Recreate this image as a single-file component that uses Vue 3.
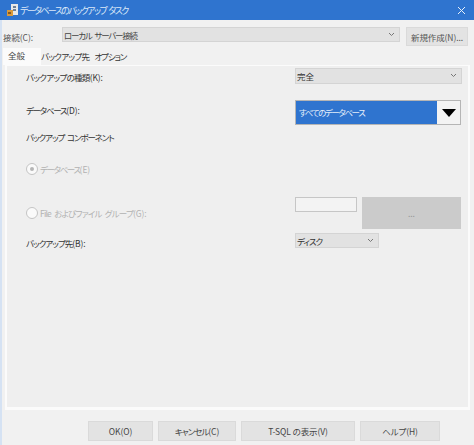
<script setup>
const footer = [
  { main: 'OK', sfx: '(O)', w: 65, cls: '' },
  { main: 'キャンセル', sfx: '(C)', w: 78, cls: 'tight' },
  { main: 'T-SQL の表示', sfx: '(V)', w: 114, cls: '' },
  { main: 'ヘルプ', sfx: '(H)', w: 80, cls: '' },
]
</script>

<template>
  <div class="window">
    <header class="title">
      <svg class="logo" width="12" height="13" viewBox="0 0 12 13">
        <rect x="4" y="0" width="7" height="11" fill="#e8e8e8" />
        <rect x="6" y="2" width="3" height="2" fill="#6d7f96" />
        <rect x="6" y="5" width="3" height="2" fill="#6d7f96" />
        <rect x="0" y="6" width="6" height="6" fill="#d99a3c" />
        <rect x="1" y="8" width="3" height="2" fill="#8a5a20" />
      </svg>
      <span class="title-text">データベースのバックアップ タスク</span>
      <svg class="close" width="9" height="9" viewBox="0 0 9 9">
        <path d="M1 1l7 7M8 1L1 8" stroke="#e6f0fb" stroke-width="1" fill="none" />
      </svg>
    </header>

    <div class="body">
      <div class="conn-row">
        <label class="conn-label">接続(C):</label>
        <div class="select conn-select">
          <span class="conn-value">ローカル サーバー接続</span>
          <svg class="chev" width="7" height="5" viewBox="0 0 7 5"><path d="M1 1l2.5 2.5L6 1" stroke="#777" fill="none" /></svg>
        </div>
        <button class="btn new-btn">新規作成(N)...</button>
      </div>

      <nav class="tabs">
        <span class="tab active">全般</span>
        <span class="tab dest-tab">バックアップ先</span>
        <span class="tab opt-tab">オプション</span>
      </nav>

      <section class="panel">
        <div class="form-row row-type">
          <label class="lbl">バックアップの種類<span class="sfx">(K):</span></label>
          <div class="select type-select">
            <span>完全</span>
            <svg class="chev" width="7" height="5" viewBox="0 0 7 5"><path d="M1 1l2.5 2.5L6 1" stroke="#777" fill="none" /></svg>
          </div>
        </div>

        <div class="form-row row-db">
          <label class="lbl">データベース<span class="sfx">(D):</span></label>
          <div class="db-select">
            <span class="db-value">すべてのデータベース</span>
            <span class="db-arrow">
              <svg width="14" height="8" viewBox="0 0 14 8"><path d="M0 0h14L7 8z" fill="#000" /></svg>
            </span>
          </div>
        </div>

        <div class="lbl comp">バックアップ コンポーネント</div>

        <div class="radio-row radio-db">
          <span class="radio on"><i></i></span>
          <span class="disabled">データベース<span class="sfx">(E)</span></span>
        </div>

        <div class="form-row row-file">
          <div class="radio-row">
            <span class="radio"></span>
            <span class="disabled file-text">File およびファイル グループ<span class="sfx">(G):</span></span>
          </div>
          <div class="file-ctrl">
            <div class="file-input"></div>
            <div class="file-btn">...</div>
          </div>
        </div>

        <div class="form-row row-dest">
          <label class="lbl">バックアップ先<span class="sfx">(B):</span></label>
          <div class="select disk-select">
            <span>ディスク</span>
            <svg class="chev" width="7" height="5" viewBox="0 0 7 5"><path d="M1 1l2.5 2.5L6 1" stroke="#777" fill="none" /></svg>
          </div>
        </div>
      </section>

      <footer class="footer">
        <button v-for="b in footer" :key="b.main" class="btn foot-btn" :class="b.cls" :style="{ width: b.w + 'px' }">{{ b.main }}<span class="sfx">{{ b.sfx }}</span></button>
      </footer>
    </div>
  </div>
</template>

<style>
html, body { margin: 0; background: #f0f0f0; }
</style>

<style scoped>
.window {
  width: 474px;
  height: 445px;
  overflow: hidden;
  box-sizing: border-box;
  font-family: "Noto Sans CJK JP", "Noto Sans", sans-serif;
  font-size: 8.5px;
  font-feature-settings: "palt";
  letter-spacing: -0.1px;
  color: #333;
  background: #f0f0f0;
  display: flex;
  flex-direction: column;
}
.sfx { letter-spacing: -0.1px; }
.title {
  height: 20px;
  flex: none;
  background: #2f74cf;
  color: #dbe8f8;
  display: flex;
  align-items: center;
  padding: 0 6px 0 7px;
  font-size: 9px;
  letter-spacing: -1.6px;
  word-spacing: 2px;
}
.logo { flex: none; margin-right: 1px; }
.title-text { flex: 1; }
.close { flex: none; margin-right: 2px; }
.body {
  flex: 1;
  display: flex;
  flex-direction: column;
  border-left: 2px solid #d5e2f3;
  background: #f1f1f1;
  min-height: 0;
}
.conn-row {
  display: flex;
  align-items: flex-start;
  padding: 7px 6px 0 1px;
  height: 28px;
  box-sizing: border-box;
  flex: none;
}
.conn-label { width: 59px; padding-top: 4px; flex: none; color: #555; }
.select {
  box-sizing: border-box;
  display: flex;
  align-items: center;
  justify-content: space-between;
  background: #e2e2e2;
  border: 1px solid #d4d4d4;
  padding: 0 4px 0 1px;
}
.chev { flex: none; }
.conn-select { width: 338px; height: 15px; flex: none; color: #444; }
.conn-value { letter-spacing: -1.2px; word-spacing: 2px; }
.new-btn { width: 62px; height: 19px; margin-left: 6px; flex: none; color: #555; }
.btn {
  box-sizing: border-box;
  background: #e3e3e3;
  border: 1px solid #dadada;
  font: inherit;
  font-feature-settings: "palt";
  letter-spacing: -0.1px;
  padding: 0;
  white-space: nowrap;
}
.tabs {
  display: flex;
  align-items: flex-end;
  height: 17px;
  flex: none;
  padding-left: 1px;
}
.tab { line-height: 15px; padding-bottom: 1px; color: #333; }
.dest-tab { letter-spacing: -0.7px; margin-right: 5px; }
.opt-tab { letter-spacing: -1.1px; }
.tab.active {
  width: 38px;
  height: 17px;
  box-sizing: border-box;
  padding-left: 5px;
  background: #fbfbfb;
  line-height: 15px;
  color: #444;
}
.panel {
  width: 465px;
  height: 345px;
  flex: none;
  box-sizing: border-box;
  margin-left: 3px;
  border: solid #fbfbfb;
  border-width: 1px 2px 3px 2px;
  background: #efefef;
  padding: 0 6px 0 19px;
  display: flex;
  flex-direction: column;
}
.form-row { display: flex; justify-content: space-between; align-items: center; }
.lbl { color: #333; }
.row-type { height: 17px; margin-top: 1px; }
.row-type .lbl { padding-top: 3px; letter-spacing: -0.7px; }
.type-select { width: 167px; height: 16px; }
.row-db { height: 25px; margin-top: 16px; }
.row-db .lbl { padding-bottom: 6px; letter-spacing: -1.3px; }
.db-select {
  width: 166px;
  height: 25px;
  margin-right: 1px;
  box-sizing: border-box;
  border: 1px solid #b5b5b5;
  display: flex;
  background: #f3f3f3;
}
.db-value {
  flex: 1;
  background: #2f74cf;
  color: #e4eefa;
  line-height: 23px;
  padding-left: 3px;
  letter-spacing: -1.4px;
}
.db-arrow {
  width: 23px;
  display: flex;
  align-items: center;
  justify-content: center;
}
.comp { margin-top: 6px; line-height: 13px; letter-spacing: -1.1px; word-spacing: 2px; }
.radio-row { display: flex; align-items: center; gap: 2px; }
.radio-db { margin-top: 18px; height: 14px; letter-spacing: -1.4px; }
.file-text { letter-spacing: -0.8px; word-spacing: 2px; }
.disabled { color: #b2b2b2; }
.radio {
  width: 10px;
  height: 10px;
  border-radius: 50%;
  border: 1px solid #c4c4c4;
  background: #fafafa;
  display: flex;
  align-items: center;
  justify-content: center;
  flex: none;
}
.radio i { width: 4px; height: 4px; border-radius: 50%; background: #b5b5b5; }
.row-file { margin-top: 21px; height: 32px; align-items: flex-start; }
.row-file .radio-row { margin-top: 10px; }
.file-ctrl { display: flex; gap: 5px; margin-right: 1px; }
.file-input {
  width: 62px;
  height: 15px;
  box-sizing: border-box;
  background: #f3f3f3;
  border: 1px solid #c6c6c6;
}
.file-btn {
  width: 99px;
  height: 32px;
  background: #cbcbcb;
  color: #999;
  display: flex;
  align-items: center;
  justify-content: center;
}
.row-dest { margin-top: 4px; height: 15px; }
.row-dest .lbl { padding-top: 4px; letter-spacing: -1px; }
.disk-select { width: 84px; height: 15px; margin-right: 83px; color: #333; letter-spacing: -1px; }
.footer {
  display: flex;
  gap: 5px;
  margin-top: 11px;
  padding-left: 86px;
  flex: none;
}
.foot-btn { height: 20px; color: #444; }
.foot-btn.tight { letter-spacing: -1px; }
</style>
